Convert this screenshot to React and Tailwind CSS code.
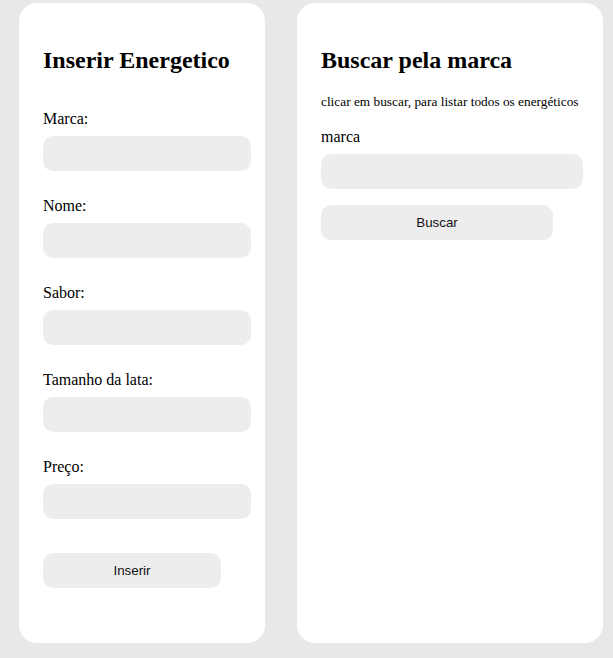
const serif = { fontFamily: '"Liberation Serif", "Times New Roman", serif' };

const fields = ['Marca:', 'Nome:', 'Sabor:', 'Tamanho da lata:', 'Preço:'];

function Field({ label, width }) {
  return (
    <div className="flex flex-col">
      <label className="text-[16px] leading-[18px] text-black">{label}</label>
      <input
        type="text"
        className={`mt-2 h-[35px] ${width} rounded-[10px] bg-[#ededed] px-3 outline-none`}
      />
    </div>
  );
}

function Button({ children, width }) {
  return (
    <button
      type="button"
      className={`h-[35px] ${width} rounded-[10px] bg-[#ededed] font-['Liberation_Sans',Arial,sans-serif] text-[13.333px] text-[#111]`}
    >
      {children}
    </button>
  );
}

export default function App() {
  return (
    <div className="flex min-h-screen gap-8 bg-[#e8e8e8] pb-[15px] pl-[19px] pt-[3px]" style={serif}>
      {/* inserir */}
      <section className="flex h-[640px] w-[246px] flex-col rounded-[18px] bg-white pl-6 pt-[43px]">
        <h2 className="text-[24px] font-bold leading-[28px] text-black">Inserir Energetico</h2>
        <div className="mt-9 flex flex-col gap-[26px]">
          {fields.map((f) => (
            <Field key={f} label={f} width="w-[208px]" />
          ))}
        </div>
        <div className="mt-[34px]">
          <Button width="w-[178px]">Inserir</Button>
        </div>
      </section>

      {/* buscar */}
      <section className="flex h-[640px] w-[306px] flex-col rounded-[18px] bg-white pl-6 pt-[43px]">
        <h2 className="text-[24px] font-bold leading-[28px] text-black">Buscar pela marca</h2>
        <p className="mt-5 text-[13.333px] leading-[15px] text-black">
          clicar em buscar, para listar todos os energéticos
        </p>
        <div className="mt-[19px]">
          <Field label="marca" width="w-[262px]" />
        </div>
        <div className="mt-4">
          <Button width="w-[232px]">Buscar</Button>
        </div>
      </section>
    </div>
  );
}
